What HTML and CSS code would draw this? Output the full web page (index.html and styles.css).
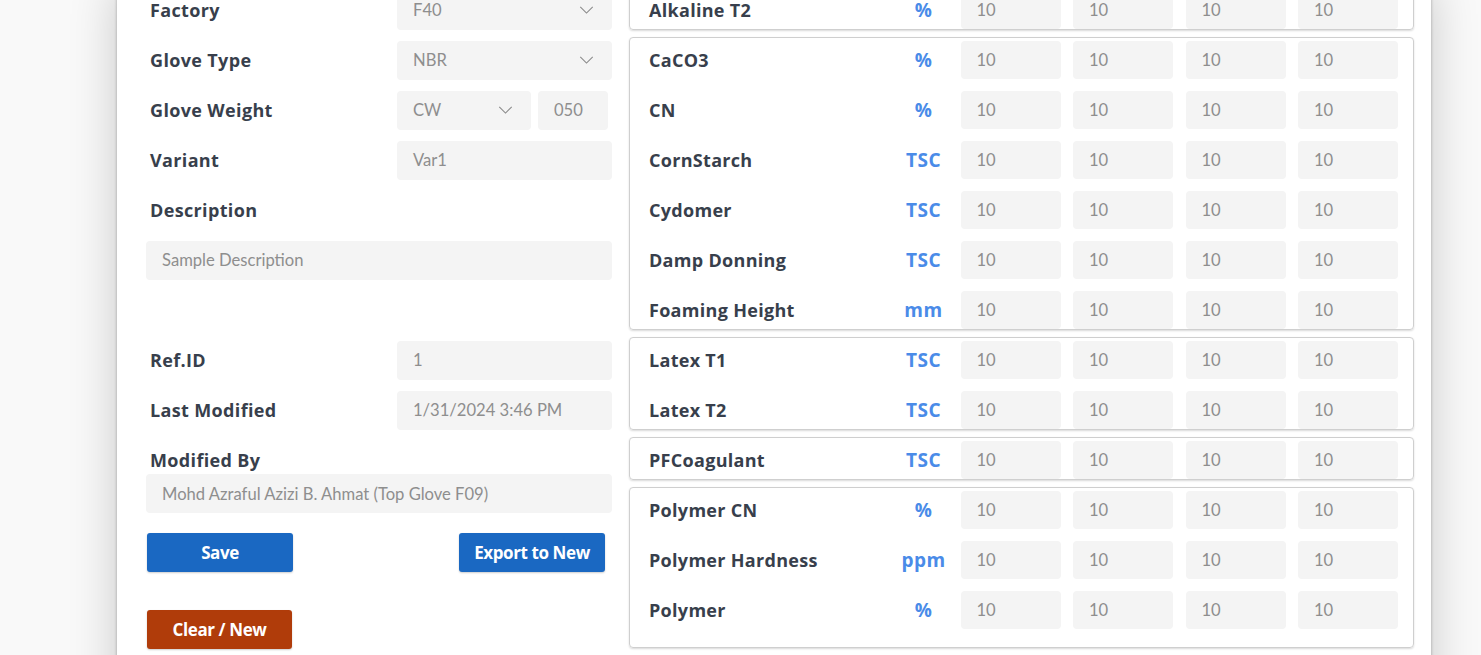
FILE: index.html
```html
<!DOCTYPE html>
<html lang="en">
<head>
<meta charset="utf-8">
<title>Recipe Editor</title>
<link rel="stylesheet" href="styles.css">
</head>
<body>
<div class="card">
  <section class="left">
    <div class="frow">
      <span class="label">Factory</span>
      <div class="field select"><span>F40</span><svg class="chev" viewBox="0 0 16 9" width="15" height="8"><path d="M1 1l7 7 7-7" fill="none" stroke="#8a8a8a" stroke-width="1.2"/></svg></div>
    </div>
    <div class="frow">
      <span class="label">Glove Type</span>
      <div class="field select"><span>NBR</span><svg class="chev" viewBox="0 0 16 9" width="15" height="8"><path d="M1 1l7 7 7-7" fill="none" stroke="#8a8a8a" stroke-width="1.2"/></svg></div>
    </div>
    <div class="frow">
      <span class="label">Glove Weight</span>
      <div class="pair">
        <div class="field select cw"><span>CW</span><svg class="chev" viewBox="0 0 16 9" width="15" height="8"><path d="M1 1l7 7 7-7" fill="none" stroke="#8a8a8a" stroke-width="1.2"/></svg></div>
        <div class="field small">050</div>
      </div>
    </div>
    <div class="frow">
      <span class="label">Variant</span>
      <div class="field">Var1</div>
    </div>
    <div class="frow">
      <span class="label">Description</span>
    </div>
    <div class="frow full">
      <div class="field wide">Sample Description</div>
    </div>
    <div class="frow"></div>
    <div class="frow">
      <span class="label">Ref.ID</span>
      <div class="field">1</div>
    </div>
    <div class="frow">
      <span class="label">Last Modified</span>
      <div class="field">1/31/2024 3:46 PM</div>
    </div>
    <div class="label modby">Modified By</div>
    <div class="field wide">Mohd Azraful Azizi B. Ahmat (Top Glove F09)</div>
    <div class="actions">
      <button class="btn blue">Save</button>
      <button class="btn blue export">Export to New</button>
    </div>
    <div class="actions second">
      <button class="btn rust">Clear / New</button>
    </div>
  </section>

  <section class="right">
    <div class="group">
      <div class="prow"><span class="pname">Alkaline T2</span><span class="unit">%</span><span class="num">10</span><span class="num">10</span><span class="num">10</span><span class="num">10</span></div>
    </div>
    <div class="group">
      <div class="prow"><span class="pname">CaCO3</span><span class="unit">%</span><span class="num">10</span><span class="num">10</span><span class="num">10</span><span class="num">10</span></div>
      <div class="prow"><span class="pname">CN</span><span class="unit">%</span><span class="num">10</span><span class="num">10</span><span class="num">10</span><span class="num">10</span></div>
      <div class="prow"><span class="pname">CornStarch</span><span class="unit">TSC</span><span class="num">10</span><span class="num">10</span><span class="num">10</span><span class="num">10</span></div>
      <div class="prow"><span class="pname">Cydomer</span><span class="unit">TSC</span><span class="num">10</span><span class="num">10</span><span class="num">10</span><span class="num">10</span></div>
      <div class="prow"><span class="pname">Damp Donning</span><span class="unit">TSC</span><span class="num">10</span><span class="num">10</span><span class="num">10</span><span class="num">10</span></div>
      <div class="prow"><span class="pname">Foaming Height</span><span class="unit">mm</span><span class="num">10</span><span class="num">10</span><span class="num">10</span><span class="num">10</span></div>
    </div>
    <div class="group">
      <div class="prow"><span class="pname">Latex T1</span><span class="unit">TSC</span><span class="num">10</span><span class="num">10</span><span class="num">10</span><span class="num">10</span></div>
      <div class="prow"><span class="pname">Latex T2</span><span class="unit">TSC</span><span class="num">10</span><span class="num">10</span><span class="num">10</span><span class="num">10</span></div>
    </div>
    <div class="group">
      <div class="prow"><span class="pname">PFCoagulant</span><span class="unit">TSC</span><span class="num">10</span><span class="num">10</span><span class="num">10</span><span class="num">10</span></div>
    </div>
    <div class="group last">
      <div class="prow"><span class="pname">Polymer CN</span><span class="unit">%</span><span class="num">10</span><span class="num">10</span><span class="num">10</span><span class="num">10</span></div>
      <div class="prow"><span class="pname">Polymer Hardness</span><span class="unit">ppm</span><span class="num">10</span><span class="num">10</span><span class="num">10</span><span class="num">10</span></div>
      <div class="prow"><span class="pname">Polymer</span><span class="unit">%</span><span class="num">10</span><span class="num">10</span><span class="num">10</span><span class="num">10</span></div>
    </div>
  </section>
</div>
</body>
</html>
```

FILE: styles.css
```css
html, body {
  margin: 0;
  padding: 0;
  height: 100%;
  overflow: hidden;
}
body {
  background: #f9f9f9;
  font-family: "Open Sans", "Noto Sans", sans-serif;
}
.card {
  box-sizing: border-box;
  width: 1314px;
  min-height: 720px;
  margin: -15px 0 0 117px;
  padding: 0 17px 0 29px;
  background: #ffffff;
  display: flex;
  gap: 17px;
  box-shadow: 0 0 3px rgba(0, 0, 0, 0.28), 0 0 45px rgba(0, 0, 0, 0.2);
}
.left {
  width: 466px;
  flex: none;
  display: flex;
  flex-direction: column;
}
.frow {
  height: 50px;
  display: grid;
  grid-template-columns: 251px 215px;
  align-items: center;
}
.frow.full {
  grid-template-columns: 466px;
}
.label {
  padding-left: 4px;
  font-size: 18px;
  font-weight: 700;
  letter-spacing: 0.35px;
  color: #383f4c;
  line-height: 20px;
  white-space: nowrap;
}
.field {
  box-sizing: border-box;
  height: 39px;
  background: #f4f4f4;
  border-radius: 4px;
  padding: 0 16px;
  display: flex;
  align-items: center;
  font-family: "Lato", sans-serif;
  font-size: 16.6px;
  line-height: 20px;
  color: #8e8e8e;
  white-space: nowrap;
}
.select {
  justify-content: space-between;
  padding-right: 18px;
}
.chev {
  flex: none;
}
.pair {
  display: flex;
  gap: 7px;
}
.cw {
  width: 134px;
}
.small {
  width: 70px;
}
.wide {
  width: 466px;
}
.modby {
  margin-top: 15px;
  margin-bottom: 4px;
}
.actions {
  display: flex;
  justify-content: space-between;
  margin-top: 20px;
  padding: 0 7px 0 1px;
}
.actions.second {
  margin-top: 38px;
}
.btn {
  height: 39px;
  width: 146px;
  border: none;
  border-radius: 3px;
  color: #ffffff;
  font-family: "Open Sans", sans-serif;
  font-size: 17px;
  font-weight: 700;
  letter-spacing: -0.4px;
  box-shadow: 0 1px 2px rgba(0, 0, 0, 0.2);
}
.blue {
  background: #1a68c2;
}
.rust {
  background: #b03c0a;
  width: 145px;
}
.right {
  width: 785px;
  flex: none;
  padding-top: 2px;
}
.group {
  border: 1px solid #cfcfcf;
  border-radius: 4px;
  box-shadow: 0 1px 2px rgba(0, 0, 0, 0.15);
  margin-bottom: 7px;
}
.group.last {
  padding-bottom: 18px;
}
.prow {
  height: 50px;
  display: grid;
  grid-template-columns: 1fr 49px repeat(4, 100px);
  column-gap: 12.5px;
  align-items: center;
  padding: 0 15px 0 19px;
}
.prow:first-child {
  margin-top: -3px;
}
.prow:last-child {
  margin-bottom: -6px;
}
.pname {
  font-size: 18px;
  font-weight: 700;
  letter-spacing: 0.3px;
  line-height: 20px;
  color: #383f4c;
  white-space: nowrap;
}
.unit {
  text-align: center;
  font-size: 19px;
  font-weight: 700;
  letter-spacing: 0.5px;
  line-height: 18px;
  color: #4a8be8;
  white-space: nowrap;
}
.num {
  box-sizing: border-box;
  height: 38px;
  background: #f4f4f4;
  border-radius: 4px;
  padding-left: 16px;
  display: flex;
  align-items: center;
  font-family: "Lato", sans-serif;
  font-size: 16.6px;
  line-height: 20px;
  color: #8e8e8e;
}
```
